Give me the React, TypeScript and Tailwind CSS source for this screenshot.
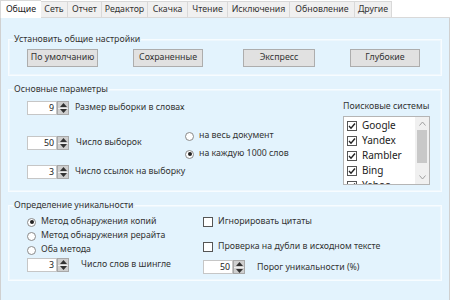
import React from 'react';

const tabs: [string, string][] = [
  ['Общие', 'w-[41px]'],
  ['Сеть', 'w-[27px]'],
  ['Отчет', 'w-[34px]'],
  ['Редактор', 'w-[46px]'],
  ['Скачка', 'w-[40px]'],
  ['Чтение', 'w-[40px]'],
  ['Исключения', 'w-[62px]'],
  ['Обновление', 'w-[65px]'],
  ['Другие', 'w-[37px]'],
];

function Spin({ value, w = 'w-[30px]' }: { value: string; w?: string }) {
  return (
    <div className="flex h-[14px] shrink-0">
      <div className={`${w} h-full bg-white border border-[#c6c6c6] text-right pr-[2px] leading-[12px] text-[#222]`}>{value}</div>
      <div className="w-[12px] h-full flex flex-col bg-[#cfcfcf] border border-[#a8a8a8]">
        <div className="flex-1 flex items-center justify-center border-b border-[#efefef]">
          <svg width="7" height="4" viewBox="0 0 7 4"><path d="M0 4 L3.5 0 L7 4Z" fill="#333" /></svg>
        </div>
        <div className="flex-1 flex items-center justify-center">
          <svg width="7" height="4" viewBox="0 0 7 4"><path d="M0 0 L3.5 4 L7 0Z" fill="#333" /></svg>
        </div>
      </div>
    </div>
  );
}

function Radio({ on, label }: { on?: boolean; label: string }) {
  return (
    <div className="flex items-center gap-[5px] h-[14px] whitespace-nowrap">
      <div className="w-[9px] h-[9px] shrink-0 rounded-full border border-[#8a8a8a] bg-white flex items-center justify-center">
        {on && <div className="w-[4px] h-[4px] rounded-full bg-[#222]" />}
      </div>
      <span>{label}</span>
    </div>
  );
}

function Check({ on, label }: { on?: boolean; label: string }) {
  return (
    <div className="flex items-center gap-[5px] whitespace-nowrap">
      <div className="w-[10px] h-[10px] shrink-0 border border-[#555] bg-white flex items-center justify-center">
        {on && (
          <svg width="8" height="8" viewBox="0 0 8 8">
            <path d="M1 4 L3 6.2 L7 1.5" stroke="#222" strokeWidth="1.4" fill="none" />
          </svg>
        )}
      </div>
      <span>{label}</span>
    </div>
  );
}

function Group({ title, className, children }: { title: string; className?: string; children: React.ReactNode }) {
  return (
    <fieldset className={`border border-[#f7fcff] shadow-[inset_0_0_0_1px_#eef7fd] ${className ?? ''}`}>
      <legend className="ml-[4px] px-[1px] leading-[14px]">{title}</legend>
      {children}
    </fieldset>
  );
}

export default function App() {
  return (
    <div className="w-[450px] h-[300px] overflow-hidden bg-white text-[8.8px] text-[#333] font-['Noto_Sans',sans-serif] whitespace-nowrap">
      <div className="flex h-[18px] items-end">
        {tabs.map(([t, w], i) => (
          <div
            key={t}
            className={
              i === 0
                ? `${w} h-[18px] text-center bg-white border-l border-t border-[#d9d9d9] leading-[17px] text-[#222]`
                : `${w} h-[17px] text-center bg-[#f0f0f0] border-t border-r border-[#d9d9d9] border-b border-b-[#d9d9d9] leading-[15px]`
            }
          >
            {t}
          </div>
        ))}
        <div className="flex-1 h-full border-b border-[#d9d9d9]" />
      </div>
      <div className="h-[282px] bg-[#e3f3fd] border-x border-[#d0d0d0] px-[7px] pt-[14px]">
        <Group title="Установить общие настройки" className="pb-[8px]">
          <div className="flex mt-[3px] pl-[18px]">
            <button className="w-[71px] h-[18px] bg-[#e1e1e1] border border-[#adadad] text-[#333]">По умолчанию</button>
            <button className="w-[70px] h-[18px] ml-[35px] bg-[#e1e1e1] border border-[#adadad] text-[#333]">Сохраненные</button>
            <button className="w-[72px] h-[18px] ml-[40px] bg-[#e1e1e1] border border-[#adadad] text-[#333]">Экспресс</button>
            <button className="w-[70px] h-[18px] ml-[35px] bg-[#e1e1e1] border border-[#adadad] text-[#333]">Глубокие</button>
          </div>
        </Group>

        <Group title="Основные параметры" className="mt-[6px] pb-[6px]">
          <div className="flex">
            <div className="w-[176px] shrink-0 flex flex-col pl-[18px] pt-[5px]">
              <div className="flex items-center gap-[6px]">
                <Spin value="9" />
                <span>Размер выборки в словах</span>
              </div>
              <div className="flex items-center gap-[7px] mt-[21px]">
                <Spin value="50" />
                <span>Число выборок</span>
              </div>
              <div className="flex items-center gap-[6px] mt-[15px]">
                <Spin value="3" />
                <span>Число ссылок на выборку</span>
              </div>
            </div>
            <div className="flex flex-col pt-[33px] gap-[4px]">
              <Radio label="на весь документ" />
              <Radio on label="на каждую 1000 слов" />
            </div>
            <div className="flex flex-col ml-auto mr-[11px] pt-[3px]">
              <span className="leading-[14px]">Поисковые системы</span>
              <div className="w-[87px] h-[69px] mt-[3px] bg-white border border-[#b5b5b5] flex overflow-hidden">
                <div className="flex-1 flex flex-col pl-[3px] pt-[1px]">
                  {['Google', 'Yandex', 'Rambler', 'Bing', 'Yahoo'].map((s) => (
                    <div key={s} className="h-[15px] flex items-center text-[10px] text-[#222] shrink-0">
                      <Check on label={s} />
                    </div>
                  ))}
                </div>
                <div className="w-[14px] bg-[#f0f0f0] flex flex-col items-center">
                  <svg className="mt-[4px]" width="7" height="5" viewBox="0 0 7 5"><path d="M0.5 4.5 L3.5 1 L6.5 4.5" stroke="#a0a0a0" fill="none" /></svg>
                  <div className="w-[10px] h-[33px] mt-[4px] bg-[#c8c8c8]" />
                  <svg className="mt-auto mb-[4px]" width="7" height="5" viewBox="0 0 7 5"><path d="M0.5 0.5 L3.5 4 L6.5 0.5" stroke="#a0a0a0" fill="none" /></svg>
                </div>
              </div>
            </div>
          </div>
        </Group>

        <Group title="Определение уникальности" className="mt-[6px] pb-[6px]">
          <div className="flex">
            <div className="w-[194px] shrink-0 flex flex-col pl-[18px] pt-[3px]">
              <Radio on label="Метод обнаружения копий" />
              <Radio label="Метод обнаружения рерайта" />
              <Radio label="Оба метода" />
              <div className="flex items-center gap-[12px] mt-[1px]">
                <Spin value="3" />
                <span>Число слов в шингле</span>
              </div>
            </div>
            <div className="flex flex-col pt-[3px]">
              <Check label="Игнорировать цитаты" />
              <div className="mt-[12px]">
                <Check label="Проверка на дубли в исходном тексте" />
              </div>
              <div className="flex items-center gap-[12px] mt-[7px]">
                <Spin value="50" />
                <span>Порог уникальности (%)</span>
              </div>
            </div>
          </div>
        </Group>
      </div>
    </div>
  );
}
